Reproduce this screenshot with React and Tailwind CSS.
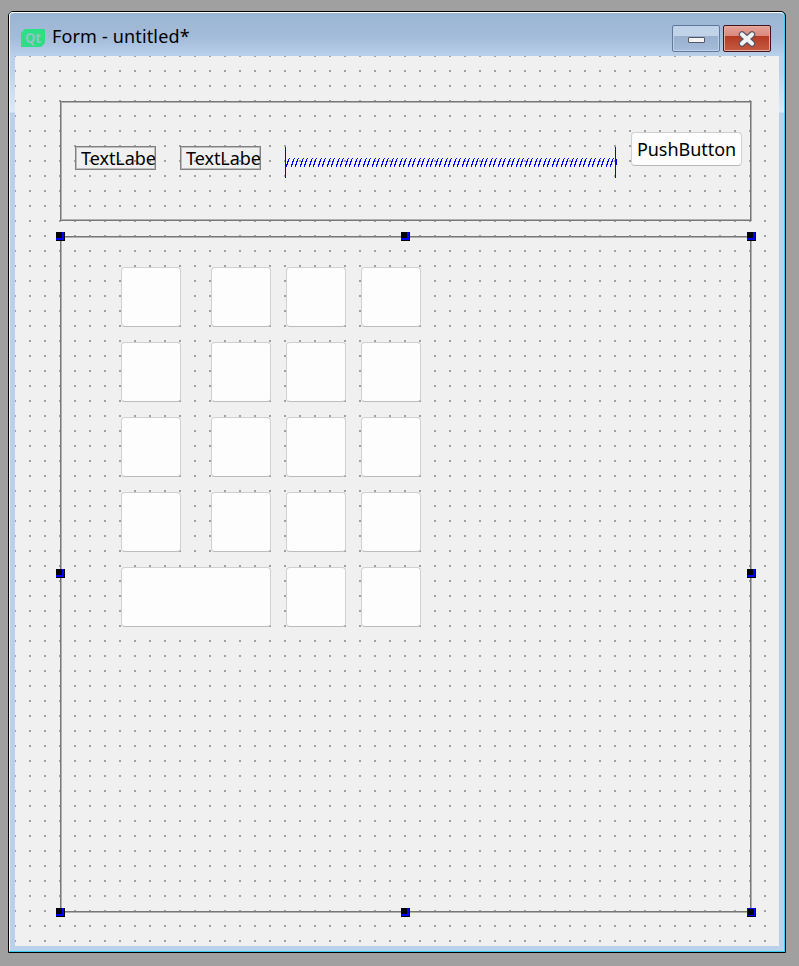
const font = "font-['Noto_Sans','Noto_Sans_CJK_SC',sans-serif]";

function Handle({ place, full }) {
  return (
    <svg className={`absolute ${place}`} width="9" height="9" shapeRendering="crispEdges">
      <rect width="9" height="9" fill="#000" />
      {full ? (
        <path d="M0.5 0.5H7.5V7.5H0.5Z" fill="none" stroke="#00f" />
      ) : (
        <path d="M0 7H7V0" fill="none" stroke="#00f" strokeWidth="2" />
      )}
    </svg>
  );
}

function Label() {
  return (
    <div className="h-6 w-[81px] overflow-hidden border border-[#808080] pl-[5px] whitespace-nowrap shadow-[inset_0_0_0_1px_#bcbcbc]">
      <div className="-mt-px h-6 w-[75px] overflow-hidden text-[18px] leading-6 tracking-[-0.05px] text-black">TextLabel</div>
    </div>
  );
}

function Key({ wide }) {
  return (
    <div
      className={`h-[60px] rounded-[4px] border border-[#d0d0d0] border-b-[#bcbcbc] bg-[#fdfdfd] ${wide ? "w-[150px]" : "w-[60px]"}`}
    />
  );
}

function Spacer() {
  const strokes = Array.from({ length: 73 }, (_, i) => Math.round(i * 4.5));
  return (
    <svg width="332" height="31" shapeRendering="crispEdges" className="block">
      <path d="M0.5 0V31M330.5 0V31" stroke="#00f" />
      <path d="M331 12V18" stroke="#00f" strokeWidth="2" />
      {strokes.map((x) => (
        <path
          key={x}
          d={`M${x + 1.5} 20V17M${x + 2.5} 18V14M${x + 3.5} 15V12M${x + 4.5} 12V11`}
          stroke="#00f"
        />
      ))}
    </svg>
  );
}

export default function App() {
  return (
    <div className={`h-[966px] w-[799px] overflow-hidden bg-[#a0a0a0] pt-[11px] pl-2 ${font}`}>
      <div className="h-[942px] w-[778px] rounded-t-[5px] border border-black bg-[#36cfee]">
        <div className="mr-px mb-px h-[939px] rounded-t-[4px] border-t border-l border-white bg-[linear-gradient(#9ab5d3_0px,#a3bcda_25px,#bcd2ec_45px,#bdd3ec_60px,#dde9f6_99px,#b9d1ea_100px)]">
          <div className="flex h-[43px] pl-[11px]">
            <svg width="24" height="18" viewBox="0 0 24 18" className="mt-4">
              <path d="M4 0H24V14L20 18H0V4Z" fill="#2cde85" />
              <text x="4" y="14" fontSize="14" fontWeight="700" fill="#8fc5c4" textLength="16" lengthAdjust="spacingAndGlyphs">Qt</text>
            </svg>
            <div className="mt-[11px] ml-[7px] text-[18px] leading-6 tracking-[0.15px] text-black">Form - untitled*</div>
            <div className="mt-3 mr-[13px] ml-auto flex gap-[3px]">
              <div className="flex h-[27px] w-12 items-center justify-center rounded-[2px] border border-[#63799a] bg-[linear-gradient(#c1d3e8_0_40%,#98b0cd_40%,#a5bdda)] shadow-[inset_0_0_0_1px_#bdd2ea]">
                <div className="mt-[3px] h-[6px] w-[17px] rounded-[1px] border border-[#535666] bg-[#f3f3f3]" />
              </div>
              <div className="flex h-[27px] w-12 items-center justify-center rounded-[2px] border border-[#43141c] bg-[linear-gradient(#e5a399,#da887d_40%,#b43a22_40%,#c55b42)] shadow-[inset_0_0_0_1px_#e8a99e]">
                <svg width="18" height="16" viewBox="0 0 18 16">
                  <path d="M4 3.5L14 12.5M14 3.5L4 12.5" stroke="#535666" strokeWidth="6.4" strokeLinecap="round" />
                  <path d="M4 3.5L14 12.5M14 3.5L4 12.5" stroke="#f3f3f3" strokeWidth="4.2" strokeLinecap="round" />
                </svg>
              </div>
            </div>
          </div>
          <div className="ml-[5px] h-[890px] w-[764px] bg-[#f0f0f0] bg-[conic-gradient(from_270deg_at_2px_2px,#a0a0a0_90deg,transparent_0)] bg-[size:15px_15px] bg-[position:-1px_-1px] px-[45px] pt-[45px]">
            <div className="h-[120px] w-[692px] border border-[#777] border-r-[#b0b0b0] p-px shadow-[inset_-1px_0_0_#777,inset_1px_1px_0_#b0b0b0,inset_0_-1px_0_#b0b0b0]">
              <div className="flex">
                <div className="mt-[43px] ml-[13px] flex gap-6">
                  <Label />
                  <Label />
                </div>
                <div className="mt-[44px] ml-6"><Spacer /></div>
                <div className="mt-[29px] ml-[14px] h-[34px] w-[111px] shrink-0 rounded-[4px] border border-[#d0d0d0] border-b-[#b8b8b8] bg-[#fdfdfd] text-center text-[18px] leading-[32px] tracking-[-0.05px] text-black">
                  PushButton
                </div>
              </div>
            </div>
            <div className="relative mt-[15px] h-[677px] w-[692px] border border-[#777] border-r-[#b0b0b0] border-b-[#b0b0b0] pt-[30px] pl-[60px] shadow-[inset_-1px_-1px_0_#777,inset_1px_1px_0_#b0b0b0]">
              <div className="grid grid-cols-[75px_60px_60px_60px] gap-[15px]">
                {Array.from({ length: 16 }, (_, i) => <Key key={i} />)}
                <div className="col-span-2"><Key wide /></div>
                <Key />
                <Key />
              </div>
              <Handle place="-top-[5px] -left-[5px]" />
              <Handle place="-top-[5px] left-[340px]" />
              <Handle place="-top-[5px] left-[686px]" />
              <Handle place="top-[332px] -left-[5px]" />
              <Handle place="top-[332px] left-[686px]" />
              <Handle place="top-[671px] -left-[5px]" />
              <Handle place="top-[671px] left-[340px]" />
              <Handle place="top-[671px] left-[686px]" full />
            </div>
          </div>
        </div>
      </div>
    </div>
  );
}
